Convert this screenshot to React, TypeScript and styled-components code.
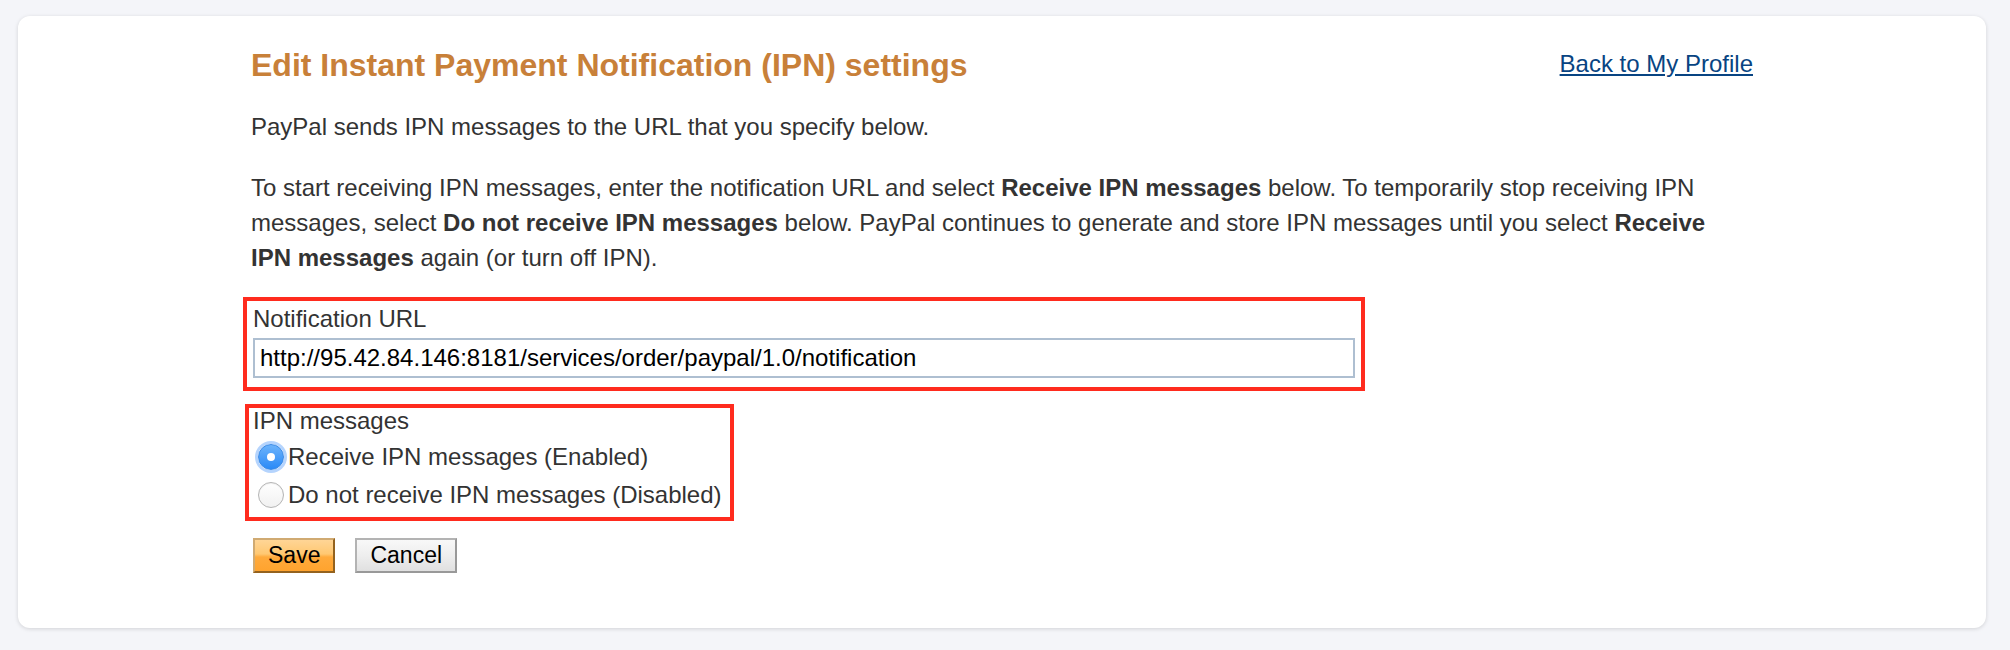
import React from "react";
import styled, { createGlobalStyle, css } from "styled-components";

const GlobalStyle = createGlobalStyle`
  html, body {
    margin: 0;
    padding: 0;
    background: #f4f5f9;
    font-family: "Liberation Sans", Arial, Helvetica, sans-serif;
  }
  * { box-sizing: border-box; }
`;

const Page = styled.div`
  padding: 16px 24px 22px 18px;
`;

const Card = styled.div`
  background: #ffffff;
  border-radius: 12px;
  box-shadow: 0 1px 4px rgba(0, 0, 0, 0.14);
  padding: 31px 0 55px;
`;

const Content = styled.div`
  width: 1502px;
  margin: 0 auto;
  color: #333333;
`;

const HeaderRow = styled.div`
  display: flex;
  justify-content: space-between;
  align-items: flex-start;
`;

const Heading = styled.h1`
  margin: 0;
  font-size: 32px;
  line-height: 36px;
  font-weight: bold;
  color: #c88039;
`;

const BackLink = styled.a`
  margin-top: 3px;
  font-size: 24px;
  line-height: 28px;
  color: #084482;
  text-decoration: underline;
  cursor: pointer;
`;

const Paragraph = styled.p`
  margin: 26px 0 0;
  font-size: 24px;
  line-height: 35px;
  color: #333333;
  white-space: nowrap;
`;

const Highlight = styled.fieldset<{ $top: number; $left: number; $width: number; $pad: string }>`
  margin: ${(p) => p.$top}px 0 0 ${(p) => p.$left}px;
  width: ${(p) => p.$width}px;
  padding: ${(p) => p.$pad};
  border: 4px solid #ff2b1e;
  min-width: 0;
  display: flex;
  flex-direction: column;
`;

const FieldLabel = styled.label<{ $lh: number }>`
  font-size: 24px;
  line-height: ${(p) => p.$lh}px;
  color: #333333;
`;

const UrlInput = styled.input`
  margin-top: 5px;
  width: 1102px;
  height: 40px;
  border: 2px solid #aebfd1;
  padding: 0 5px;
  font-family: "Liberation Sans", Arial, sans-serif;
  font-size: 24px;
  color: #000000;
  background: #ffffff;
  outline: none;
`;

const RadioList = styled.div`
  margin-top: 4px;
  display: flex;
  flex-direction: column;
`;

const RadioRow = styled.label`
  height: 38px;
  display: flex;
  align-items: center;
  font-size: 24px;
  line-height: 28px;
  color: #333333;
  cursor: pointer;
`;

const RadioDot = styled.span<{ $checked: boolean }>`
  width: 26px;
  height: 26px;
  margin: 0 4px 0 5px;
  border-radius: 50%;
  flex: none;
  display: flex;
  align-items: center;
  justify-content: center;
  ${(p) =>
    p.$checked
      ? css`
          background: linear-gradient(#6cb3fb, #2a8af7);
          border: 1px solid #3a8ae6;
          box-shadow: 0 0 0 3px rgba(90, 160, 250, 0.45);
          &::after {
            content: "";
            width: 8px;
            height: 8px;
            border-radius: 50%;
            background: #ffffff;
          }
        `
      : css`
          background: linear-gradient(#ffffff, #f1f1f1);
          border: 1px solid #b4b4b4;
          box-shadow: inset 0 1px 1px rgba(0, 0, 0, 0.06);
        `}
`;

const ButtonRow = styled.div`
  margin-top: 17px;
  display: flex;
  gap: 20px;
  padding-left: 2px;
`;

const Button = styled.button<{ $primary?: boolean }>`
  height: 35px;
  padding: 0 13px;
  font-family: "Liberation Sans", Arial, sans-serif;
  font-size: 23px;
  line-height: 1;
  color: #000000;
  cursor: pointer;
  border-width: 2px;
  border-style: solid;
  ${(p) =>
    p.$primary
      ? css`
          background: linear-gradient(#ffd596 0%, #ffc872 45%, #ffaa3c 55%, #ffa32e 100%);
          border-color: #d0aa72 #94621e #94621e #d0aa72;
        `
      : css`
          background: linear-gradient(#f8f8f8 0%, #eeeeee 50%, #e0e0e0 100%);
          border-color: #b3b3b3 #999999 #999999 #b3b3b3;
        `}
`;

export default function App() {
  const [enabled, setEnabled] = React.useState(true);
  return (
    <>
      <GlobalStyle />
      <Page>
        <Card>
          <Content>
            <HeaderRow>
              <Heading>Edit Instant Payment Notification (IPN) settings</Heading>
              <BackLink>Back to My Profile</BackLink>
            </HeaderRow>
            <Paragraph>PayPal sends IPN messages to the URL that you specify below.</Paragraph>
            <Paragraph>
              To start receiving IPN messages, enter the notification URL and select{" "}
              <b>Receive IPN messages</b> below. To temporarily stop receiving IPN
              <br />
              messages, select <b>Do not receive IPN messages</b> below. PayPal continues to generate
              and store IPN messages until you select <b>Receive</b>
              <br />
              <b>IPN messages</b> again (or turn off IPN).
            </Paragraph>
            <Highlight $top={22} $left={-8} $width={1122} $pad="4px 6px 9px 6px">
              <FieldLabel $lh={28}>Notification URL</FieldLabel>
              <UrlInput
                readOnly
                value="http://95.42.84.146:8181/services/order/paypal/1.0/notification"
              />
            </Highlight>
            <Highlight $top={13} $left={-6} $width={489} $pad="0 4px 3px 4px">
              <FieldLabel $lh={26}>IPN messages</FieldLabel>
              <RadioList>
                <RadioRow onClick={() => setEnabled(true)}>
                  <RadioDot $checked={enabled} />
                  Receive IPN messages (Enabled)
                </RadioRow>
                <RadioRow onClick={() => setEnabled(false)}>
                  <RadioDot $checked={!enabled} />
                  Do not receive IPN messages (Disabled)
                </RadioRow>
              </RadioList>
            </Highlight>
            <ButtonRow>
              <Button $primary>Save</Button>
              <Button>Cancel</Button>
            </ButtonRow>
          </Content>
        </Card>
      </Page>
    </>
  );
}
